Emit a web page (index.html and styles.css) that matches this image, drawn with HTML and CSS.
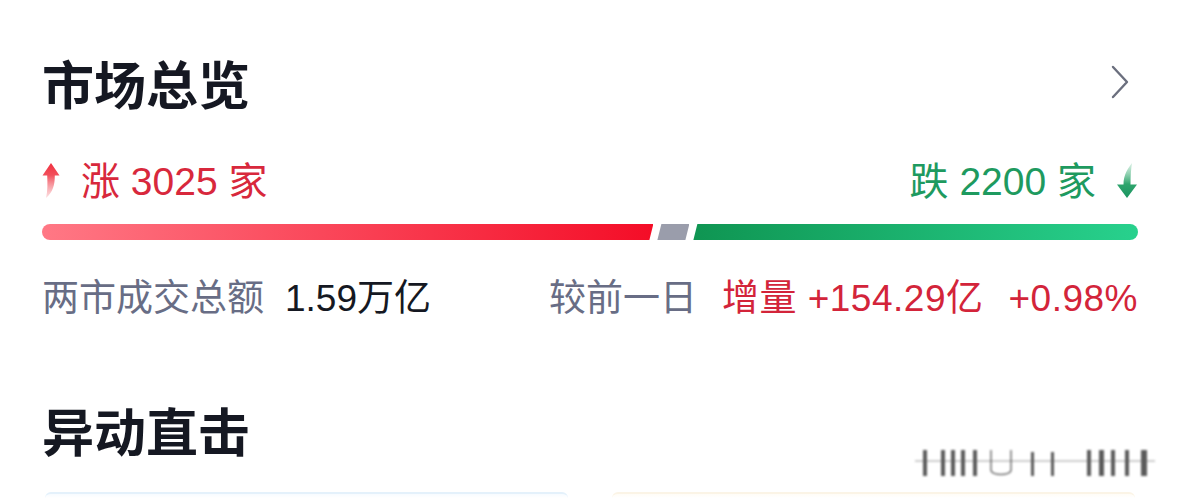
FILE: index.html
```html
<!DOCTYPE html>
<html lang="zh-CN">
<head>
    <meta charset="UTF-8">
    <meta name="viewport" content="width=device-width, initial-scale=1.0">
    <title>市场总览</title>
    <link rel="stylesheet" href="styles.css">
</head>
<body>
    <div class="page">
        <!-- 市场总览 -->
        <section class="overview">
            <div class="section-head">
                <h2 class="section-title">市场总览</h2>
                <svg class="chevron" width="20" height="36" viewBox="0 0 20 36">
                    <path d="M3 2 L17 17 L3 32" fill="none" stroke="#6b6f7e" stroke-width="2.4" stroke-linecap="round" stroke-linejoin="round"/>
                </svg>
            </div>

            <div class="count-row">
                <div class="count up">
                    <svg class="arrow" width="18" height="36" viewBox="0 0 18 36">
                        <defs>
                            <linearGradient id="upGrad" x1="0" y1="0" x2="0" y2="1">
                                <stop offset="0" stop-color="#f0303f"/>
                                <stop offset="0.35" stop-color="#f2505c"/>
                                <stop offset="1" stop-color="#f7a0a6" stop-opacity="0.35"/>
                            </linearGradient>
                        </defs>
                        <path d="M9 0 L17.5 12.5 L12.8 12.5 C12.8 22 11 29 4 35 C5.8 28 5.5 20 5.2 12.5 L0.5 12.5 Z" fill="url(#upGrad)"/>
                    </svg>
                    <span>涨 3025 家</span>
                </div>
                <div class="count down">
                    <span>跌 2200 家</span>
                    <svg class="arrow" width="22" height="36" viewBox="0 0 22 36">
                        <defs>
                            <linearGradient id="downGrad" x1="0" y1="0" x2="0" y2="1">
                                <stop offset="0" stop-color="#8fd3b0" stop-opacity="0.35"/>
                                <stop offset="0.6" stop-color="#2fa56d"/>
                                <stop offset="1" stop-color="#1a9460"/>
                            </linearGradient>
                        </defs>
                        <path d="M16 0 C12 5 7.5 12 7.5 21.5 L1 21.5 L11 35 L21 21.5 L14.5 21.5 C14.5 13 15 6 16 0 Z" fill="url(#downGrad)"/>
                    </svg>
                </div>
            </div>

            <div class="ratio-bar">
                <div class="seg seg-up" style="flex-grow: 3025"></div>
                <div class="seg seg-flat"></div>
                <div class="seg seg-down" style="flex-grow: 2200"></div>
            </div>

            <div class="turnover-row">
                <div class="turnover">
                    <span class="label">两市成交总额</span>
                    <span class="value">1.59万亿</span>
                </div>
                <div class="compare">
                    <span class="label">较前一日</span>
                    <span class="red">增量 +154.29亿</span>
                    <span class="red">+0.98%</span>
                </div>
            </div>
        </section>

        <!-- 异动直击 -->
        <section class="movers">
            <h2 class="section-title">异动直击</h2>
            <div class="cards">
                <div class="card card-blue"></div>
                <div class="card card-yellow"></div>
            </div>
        </section>
    </div>

    <div class="watermark">
        <svg width="250" height="40" viewBox="0 0 250 40">
            <g fill="#333" opacity="0.8">
                <rect x="8" y="6" width="4" height="26"/>
                <rect x="26" y="6" width="4" height="26"/>
                <rect x="36" y="6" width="4" height="26"/>
                <rect x="46" y="6" width="4" height="26"/>
                <rect x="58" y="6" width="4" height="26"/>
                <rect x="116" y="8" width="3" height="24"/>
                <rect x="136" y="8" width="3" height="24"/>
                <rect x="172" y="6" width="4" height="26"/>
                <rect x="184" y="6" width="5" height="26"/>
                <rect x="196" y="6" width="4" height="26"/>
                <rect x="210" y="6" width="4" height="26"/>
                <rect x="226" y="6" width="6" height="26"/>
                <rect x="0" y="16" width="240" height="2" opacity="0.3"/>
            </g>
            <path d="M76 6 L76 26 C76 32 96 32 96 26 L96 6" fill="none" stroke="#333" stroke-width="1.5" opacity="0.7"/>
        </svg>
    </div>
</body>
</html>
```

FILE: styles.css
```css
* { margin: 0; padding: 0; box-sizing: border-box; }
body {
    font-family: "Noto Sans CJK SC", "Noto Sans", sans-serif;
    background-color: #fff;
    color: #151822;
    height: 499px;
    overflow: hidden;
}
.page { padding: 0 41px 0 42px; }

.section-title { font-size: 52px; font-weight: bold; line-height: 1; color: #151822; }

.overview { padding-top: 57px; }
.section-head { display: flex; justify-content: space-between; align-items: center; height: 52px; padding-right: 8px; }
.chevron { display: block; }

/* 数字用 Arial 宽度 */
.count, .turnover-row { font-family: "Liberation Sans", "Noto Sans CJK SC", sans-serif; }

.count-row { display: flex; justify-content: space-between; align-items: center; height: 40px; margin-top: 52px; }
.count { display: flex; align-items: center; gap: 21px; font-size: 39px; line-height: 1; }
.count.up { color: #d8283c; }
.count.down { gap: 20px; color: #1e9a5f; }
.arrow { display: block; }

.ratio-bar { display: flex; gap: 4px; height: 16px; margin-top: 23px; }
.seg { height: 100%; }
.seg-up {
    flex-basis: 0;
    background: linear-gradient(to right, #ff7885, #f40d27);
    border-radius: 8px 0 0 8px;
    clip-path: polygon(0 0, 100% 0, calc(100% - 4px) 100%, 0 100%);
}
.seg-flat {
    width: 32px;
    background-color: #9a9dab;
    clip-path: polygon(4px 0, 100% 0, calc(100% - 4px) 100%, 0 100%);
}
.seg-down {
    flex-basis: 0;
    background: linear-gradient(to right, #0f9552, #28d18d);
    border-radius: 0 8px 8px 0;
    clip-path: polygon(4px 0, 100% 0, 100% 100%, 0 100%);
}

.turnover-row { display: flex; justify-content: space-between; align-items: center; height: 37px; margin-top: 40px; font-size: 37px; line-height: 1; }
.turnover, .compare { display: flex; align-items: baseline; gap: 21px; }
.compare { gap: 25px; }
.compare .red { letter-spacing: 0.5px; }
.label { color: #686d85; }
.value { color: #151822; }
.compare .red { color: #d3243a; }

.movers { padding-top: 87px; }
.cards { display: flex; gap: 44px; margin-top: 36px; padding: 0 3px; }
.card { flex: 1; height: 6px; border-radius: 14px 14px 0 0; }
.card-blue { border-top: 2px solid #e4f1fb; background: linear-gradient(#f7fbff, #fff); }
.card-yellow { border-top: 2px solid #fbf4e6; background: linear-gradient(#fffcf6, #fff); }

.watermark { position: absolute; left: 915px; top: 444px; filter: blur(1px); }
```
